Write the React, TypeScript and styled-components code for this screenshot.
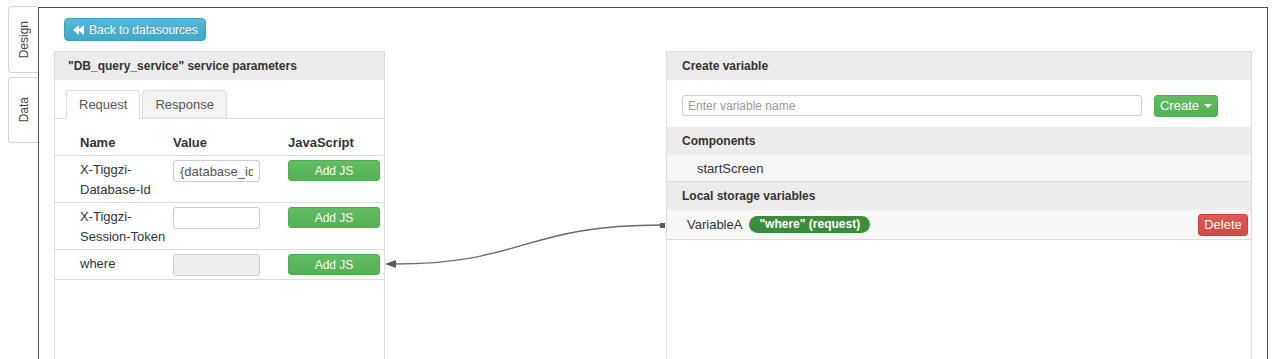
import styled, { createGlobalStyle } from 'styled-components';

const GlobalStyle = createGlobalStyle`
  html, body {
    margin: 0;
    padding: 0;
    background: #fff;
    overflow: hidden;
  }
  body {
    font-family: "Liberation Sans", Arial, sans-serif;
    color: #333;
  }
  * { box-sizing: border-box; }
`;

const Page = styled.div`
  display: flex;
  align-items: flex-start;
  height: 359px;
`;

const SideTabs = styled.div`
  display: flex;
  flex-direction: column;
  gap: 4px;
  padding: 6px 0 0 8px;
  width: 38px;
`;

const SideTab = styled.div<{ h: number }>`
  width: 30px;
  height: ${({ h }) => h}px;
  border: 1px solid #d4d4d4;
  border-right: none;
  border-radius: 4px 0 0 4px;
  background: #fff;
  display: flex;
  align-items: center;
  justify-content: center;
  span {
    writing-mode: vertical-rl;
    transform: rotate(180deg);
    font-size: 12px;
    color: #444;
  }
`;

const Frame = styled.div`
  margin-top: 7px;
  width: 1230px;
  height: 360px;
  border: 1px solid #4a4f55;
  border-bottom: none;
  padding: 10px 15px 0;
`;

const BackButton = styled.button`
  margin-left: 10px;
  height: 23px;
  padding: 0 7px 0 8px;
  display: inline-flex;
  align-items: center;
  gap: 4px;
  font-family: inherit;
  font-size: 12px;
  color: #fff;
  background: linear-gradient(#56b9d8, #42a8c8);
  border: 1px solid #3b9fbf;
  border-radius: 4px;
  text-shadow: 0 -1px 0 rgba(0, 0, 0, 0.15);
`;

const Panels = styled.div`
  position: relative;
  margin-top: 10px;
  display: grid;
  grid-template-columns: 331px 281px 586px;
  height: 320px;
`;

const Panel = styled.div`
  border: 1px solid #dcdcdc;
  background: #fff;
`;

const PanelHeader = styled.div<{ indent: number }>`
  height: 28px;
  line-height: 28px;
  padding-left: ${({ indent }) => indent}px;
  background: #ececec;
  font-size: 12px;
  font-weight: bold;
  color: #333;
`;

const TabsBar = styled.div`
  display: flex;
  gap: 2px;
  padding: 10px 0 0 11px;
  border-bottom: 1px solid #dcdcdc;
`;

const Tab = styled.div<{ active?: boolean }>`
  margin-bottom: -1px;
  padding: 4px 12px 3px;
  line-height: 20px;
  font-size: 13px;
  color: #555;
  border: 1px solid #dcdcdc;
  border-bottom-color: ${({ active }) => (active ? '#fff' : '#dcdcdc')};
  border-radius: 4px 4px 0 0;
  background: ${({ active }) => (active ? '#fff' : '#f3f3f3')};
`;

const ParamTable = styled.div`
  margin-top: 9px;
`;

const ParamRow = styled.div<{ head?: boolean }>`
  display: grid;
  grid-template-columns: 118px 115px 1fr;
  align-items: start;
  padding: ${({ head }) => (head ? '5px 0 2px' : '4px 0 2px')};
  border-bottom: 1px solid #dcdcdc;
  font-size: 13px;
  line-height: 20px;
  font-weight: ${({ head }) => (head ? 'bold' : 'normal')};
  color: #333;
`;

const NameCell = styled.div`
  padding: 0 4px 0 25px;
`;

const ValueInput = styled.input<{ disabled?: boolean }>`
  display: block;
  width: 87px;
  height: 22px;
  margin-bottom: 1px;
  padding: 0 6px;
  border: 1px solid #ccc;
  border-radius: 3px;
  background: ${({ disabled }) => (disabled ? '#eee' : '#fff')};
  font-family: inherit;
  font-size: 13px;
  color: #555;
`;

const GreenButton = styled.button<{ w: number; h: number; fs: number }>`
  width: ${({ w }) => w}px;
  height: ${({ h }) => h}px;
  padding: 0;
  display: inline-flex;
  align-items: center;
  justify-content: center;
  gap: 5px;
  font-family: inherit;
  font-size: ${({ fs }) => fs}px;
  color: #fff;
  background: linear-gradient(#62bd62, #55b155);
  border: 1px solid #4cae4c;
  border-radius: 3px;
`;

const Caret = styled.span`
  width: 0;
  height: 0;
  border-left: 4px solid transparent;
  border-right: 4px solid transparent;
  border-top: 4px solid #fff;
`;

const CreateRow = styled.div`
  height: 47px;
  display: flex;
  align-items: center;
  gap: 12px;
  padding: 4px 15px 0;
`;

const NameInput = styled.input`
  width: 460px;
  height: 21px;
  padding: 0 5px;
  border: 1px solid #ccc;
  border-radius: 3px;
  font-family: inherit;
  font-size: 12px;
  &::placeholder { color: #999; }
`;

const ListRow = styled.div<{ indent: number; h: number }>`
  height: ${({ h }) => h}px;
  display: flex;
  align-items: center;
  padding: 0 3px 0 ${({ indent }) => indent}px;
  background: #f7f7f7;
  border-bottom: 1px solid #dcdcdc;
  font-size: 13px;
  color: #333;
`;

const Badge = styled.span`
  margin-left: 7px;
  height: 17px;
  line-height: 17px;
  padding: 0 10px;
  border-radius: 9px;
  background: #3d8b3f;
  color: #fff;
  font-size: 12px;
  font-weight: bold;
`;

const DeleteButton = styled.button`
  margin-left: auto;
  width: 50px;
  height: 22px;
  padding: 0;
  font-family: inherit;
  font-size: 13px;
  color: #fff;
  background: linear-gradient(#dd5a56, #d24a46);
  border: 1px solid #c9403c;
  border-radius: 3px;
`;

const Connector = styled.svg`
  position: absolute;
  left: 0;
  top: 0;
  pointer-events: none;
  overflow: visible;
`;

const params = [
  { name: 'X-Tiggzi-Database-Id', value: '{database_id}' },
  { name: 'X-Tiggzi-Session-Token', value: '' },
  { name: 'where', value: '', disabled: true },
];

export default function App() {
  return (
    <>
      <GlobalStyle />
      <Page>
        <SideTabs>
          <SideTab h={67}><span>Design</span></SideTab>
          <SideTab h={66}><span>Data</span></SideTab>
        </SideTabs>
        <Frame>
          <BackButton>
            <svg width="12" height="10" viewBox="0 0 12 10">
              <path d="M0 5 L6 0 L6 10 Z M5 5 L11 0 L11 10 Z" fill="#fff" />
            </svg>
            Back to datasources
          </BackButton>
          <Panels>
            <Panel>
              <PanelHeader indent={13}>"DB_query_service" service parameters</PanelHeader>
              <TabsBar>
                <Tab active>Request</Tab>
                <Tab>Response</Tab>
              </TabsBar>
              <ParamTable>
                <ParamRow head>
                  <NameCell>Name</NameCell>
                  <div>Value</div>
                  <div>JavaScript</div>
                </ParamRow>
                {params.map((p) => (
                  <ParamRow key={p.name}>
                    <NameCell>{p.name}</NameCell>
                    <div>
                      <ValueInput defaultValue={p.value} disabled={p.disabled} />
                    </div>
                    <div>
                      <GreenButton w={92} h={21} fs={12}>Add JS</GreenButton>
                    </div>
                  </ParamRow>
                ))}
              </ParamTable>
            </Panel>
            <div />
            <Panel>
              <PanelHeader indent={15}>Create variable</PanelHeader>
              <CreateRow>
                <NameInput placeholder="Enter variable name" />
                <GreenButton w={64} h={22} fs={13}>
                  Create <Caret />
                </GreenButton>
              </CreateRow>
              <PanelHeader indent={15}>Components</PanelHeader>
              <ListRow indent={30} h={27}>startScreen</ListRow>
              <PanelHeader indent={15}>Local storage variables</PanelHeader>
              <ListRow indent={20} h={30}>
                VariableA
                <Badge>"where" (request)</Badge>
                <DeleteButton>Delete</DeleteButton>
              </ListRow>
            </Panel>
            <Connector width="1" height="1">
              <path d="M608 174 C470 174 470 213 340 213" fill="none" stroke="#6a6a6a" strokeWidth="1.3" />
              <rect x="606" y="172" width="5" height="5" fill="#5a5a5a" />
              <polygon points="331,213 342,209 342,217" fill="#5a5a5a" />
            </Connector>
          </Panels>
        </Frame>
      </Page>
    </>
  );
}
